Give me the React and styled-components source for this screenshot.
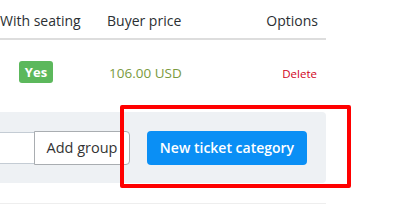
import React from "react";
import styled, { createGlobalStyle } from "styled-components";

const Global = createGlobalStyle`
  html, body {
    margin: 0;
    padding: 0;
    background: #fff;
    overflow: hidden;
  }
  body {
    font-family: "Open Sans", "Noto Sans", sans-serif;
    color: #333;
  }
`;

const Page = styled.div`
  position: relative;
  margin-left: -60px;
  width: 386px;
`;

const Row = styled.div`
  display: grid;
  grid-template-columns: 60px 72px 1fr 110px;
  align-items: center;
  height: ${(p) => p.h}px;
  border-bottom: ${(p) => (p.head ? "2px solid #ddd" : "none")};
`;

const Cell = styled.div`
  text-align: ${(p) => p.align || "left"};
  padding-left: ${(p) => p.pl || 0}px;
  padding-right: ${(p) => p.pr || 0}px;
  font-size: 14px;
  white-space: nowrap;
`;

const HeadCell = styled(Cell)`
  font-size: 14px;
  color: #2b2f33;
  padding-top: 2px;
`;

const Badge = styled.span`
  display: inline-block;
  width: 34px;
  height: 22px;
  line-height: 22px;
  border-radius: 3px;
  background: #5cb85c;
  color: #fff;
  font-weight: 700;
  font-size: 13px;
  text-align: center;
`;

const Price = styled.span`
  color: #7a9a3e;
  font-size: 13.5px;
`;

const DeleteLink = styled.a`
  color: #d0021b;
  font-size: 11.5px;
  cursor: pointer;
`;

const Panel = styled.div`
  margin-top: 8px;
  background: #eef1f4;
  border-radius: 4px;
  height: 71px;
  display: flex;
  align-items: center;
  padding: 0 19px 0 0;
  box-sizing: border-box;
`;

const Group = styled.div`
  display: flex;
  align-items: stretch;
  height: 34px;
  flex: 1;
  min-width: 0;
`;

const Input = styled.input`
  flex: 1;
  min-width: 0;
  height: 32px;
  margin: 1px 0;
  border: 1px solid #c4ccd4;
  border-right: none;
  background: #fff;
  box-sizing: border-box;
  outline: none;
`;

const GhostButton = styled.button`
  flex-shrink: 0;
  width: 96px;
  border: 1px solid #a9adb1;
  border-radius: 0 4px 4px 0;
  background: #fff;
  color: #333;
  font-family: inherit;
  font-size: 14.5px;
  padding: 0;
  white-space: nowrap;
`;

const PrimaryButton = styled.button`
  flex-shrink: 0;
  margin-left: 17px;
  width: 160px;
  height: 34px;
  border: none;
  border-radius: 4px;
  background: #0a8ff5;
  color: #fff;
  font-family: inherit;
  font-weight: 600;
  font-size: 14px;
  padding: 0;
  white-space: nowrap;
`;

const Divider = styled.div`
  margin-top: 20px;
  border-top: 1px solid #eee;
`;

const Highlight = styled.div`
  position: absolute;
  left: 180px;
  top: 105px;
  width: 231px;
  height: 83px;
  border: 4px solid #ff0000;
  border-radius: 2px;
  box-sizing: border-box;
  pointer-events: none;
`;

export default function App() {
  return (
    <>
      <Global />
      <Page>
        <Row head h={38}>
          <HeadCell />
          <HeadCell align="center">With seating</HeadCell>
          <HeadCell pl={35}>Buyer price</HeadCell>
          <HeadCell align="right" pr={8}>
            Options
          </HeadCell>
        </Row>
        <Row h={64}>
          <Cell />
          <Cell align="center">
            <Badge>Yes</Badge>
          </Cell>
          <Cell pl={37}>
            <Price>106.00 USD</Price>
          </Cell>
          <Cell align="right" pr={9}>
            <DeleteLink>Delete</DeleteLink>
          </Cell>
        </Row>
        <Panel>
          <Group>
            <Input />
            <GhostButton>Add group</GhostButton>
          </Group>
          <PrimaryButton>New ticket category</PrimaryButton>
        </Panel>
        <Divider />
        <Highlight />
      </Page>
    </>
  );
}
